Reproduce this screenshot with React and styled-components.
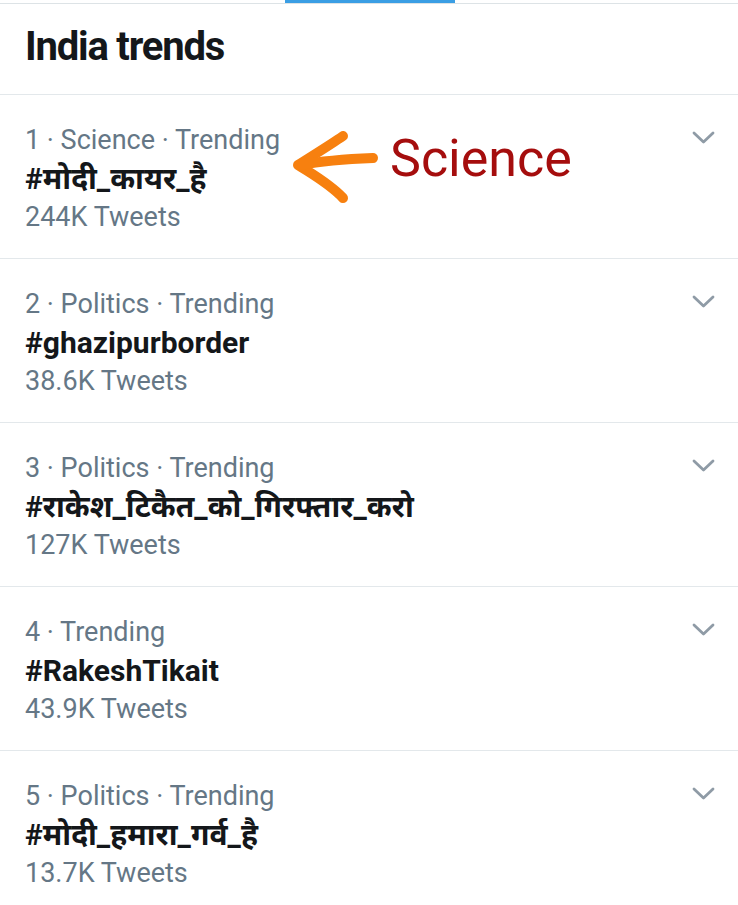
import React from 'react';
import styled, { createGlobalStyle } from 'styled-components';

const GlobalStyle = createGlobalStyle`
  html, body {
    margin: 0;
    padding: 0;
    background: #ffffff;
    font-family: Roboto, "Noto Sans", "Liberation Sans", sans-serif;
  }
`;

const trends = [
  { meta: '1 · Science · Trending', tag: '#मोदी_कायर_है', count: '244K Tweets', note: true },
  { meta: '2 · Politics · Trending', tag: '#ghazipurborder', count: '38.6K Tweets' },
  { meta: '3 · Politics · Trending', tag: '#राकेश_टिकैत_को_गिरफ्तार_करो', count: '127K Tweets' },
  { meta: '4 · Trending', tag: '#RakeshTikait', count: '43.9K Tweets' },
  { meta: '5 · Politics · Trending', tag: '#मोदी_हमारा_गर्व_है', count: '13.7K Tweets' },
];

const Page = styled.div`
  width: 738px;
  height: 905px;
  overflow: hidden;
  background: #fff;
`;

const TabStrip = styled.div`
  height: 3px;
  border-bottom: 1px solid #dde3e6;
  display: flex;
  padding-left: 285px;
`;

const ActiveTab = styled.div`
  width: 170px;
  height: 3px;
  background: #3a9ee4;
`;

const Header = styled.h2`
  margin: 0;
  height: 91px;
  box-sizing: border-box;
  padding: 23px 25px 0;
  font-size: 40px;
  line-height: 40px;
  font-weight: 700;
  color: #14171a;
  border-bottom: 1px solid #e3e8eb;
  letter-spacing: -1.2px;
`;

const Row = styled.div`
  position: relative;
  height: 164px;
  box-sizing: border-box;
  padding: 30px 25px 0;
  border-bottom: 1px solid #e3e8eb;
`;

const Meta = styled.div`
  font-size: 27px;
  line-height: 30px;
  color: #657786;
`;

const Tag = styled.div`
  margin-top: 9px;
  font-size: 30px;
  line-height: 30px;
  font-weight: 700;
  color: #14171a;
`;

const Count = styled.div`
  margin-top: 8px;
  font-size: 27px;
  line-height: 30px;
  color: #657786;
`;

const Chevron = styled.svg`
  position: absolute;
  right: 23px;
  top: 36px;
  width: 23px;
  height: 14px;
`;

const Note = styled.div`
  position: absolute;
  left: 290px;
  top: 33px;
  display: flex;
  align-items: flex-start;
  gap: 10px;
`;

const NoteText = styled.span`
  margin-top: 5px;
  font-size: 52px;
  color: #a50d0d;
  line-height: 1;
`;

const Arrow = () => (
  <svg width="90" height="78" viewBox="0 0 90 78">
    <path d="M53 8 C40 17 22 28 8 37 C22 46 40 56 53 70" fill="none" stroke="#f7800f" strokeWidth="10" strokeLinecap="round" strokeLinejoin="round" />
    <path d="M10 37 C32 33 58 31 83 30" fill="none" stroke="#f7800f" strokeWidth="10" strokeLinecap="round" />
  </svg>
);

const App = () => (
  <Page>
    <GlobalStyle />
    <TabStrip>
      <ActiveTab />
    </TabStrip>
    <Header>India trends</Header>
    {trends.map((t) => (
      <Row key={t.tag}>
        <Meta>{t.meta}</Meta>
        <Tag>{t.tag}</Tag>
        <Count>{t.count}</Count>
        <Chevron viewBox="0 0 23 14">
          <path d="M2 2 L11.5 11 L21 2" fill="none" stroke="#8f9ba6" strokeWidth="2.8" strokeLinecap="round" strokeLinejoin="round" />
        </Chevron>
        {t.note && (
          <Note>
            <Arrow />
            <NoteText>Science</NoteText>
          </Note>
        )}
      </Row>
    ))}
  </Page>
);

export default App;
